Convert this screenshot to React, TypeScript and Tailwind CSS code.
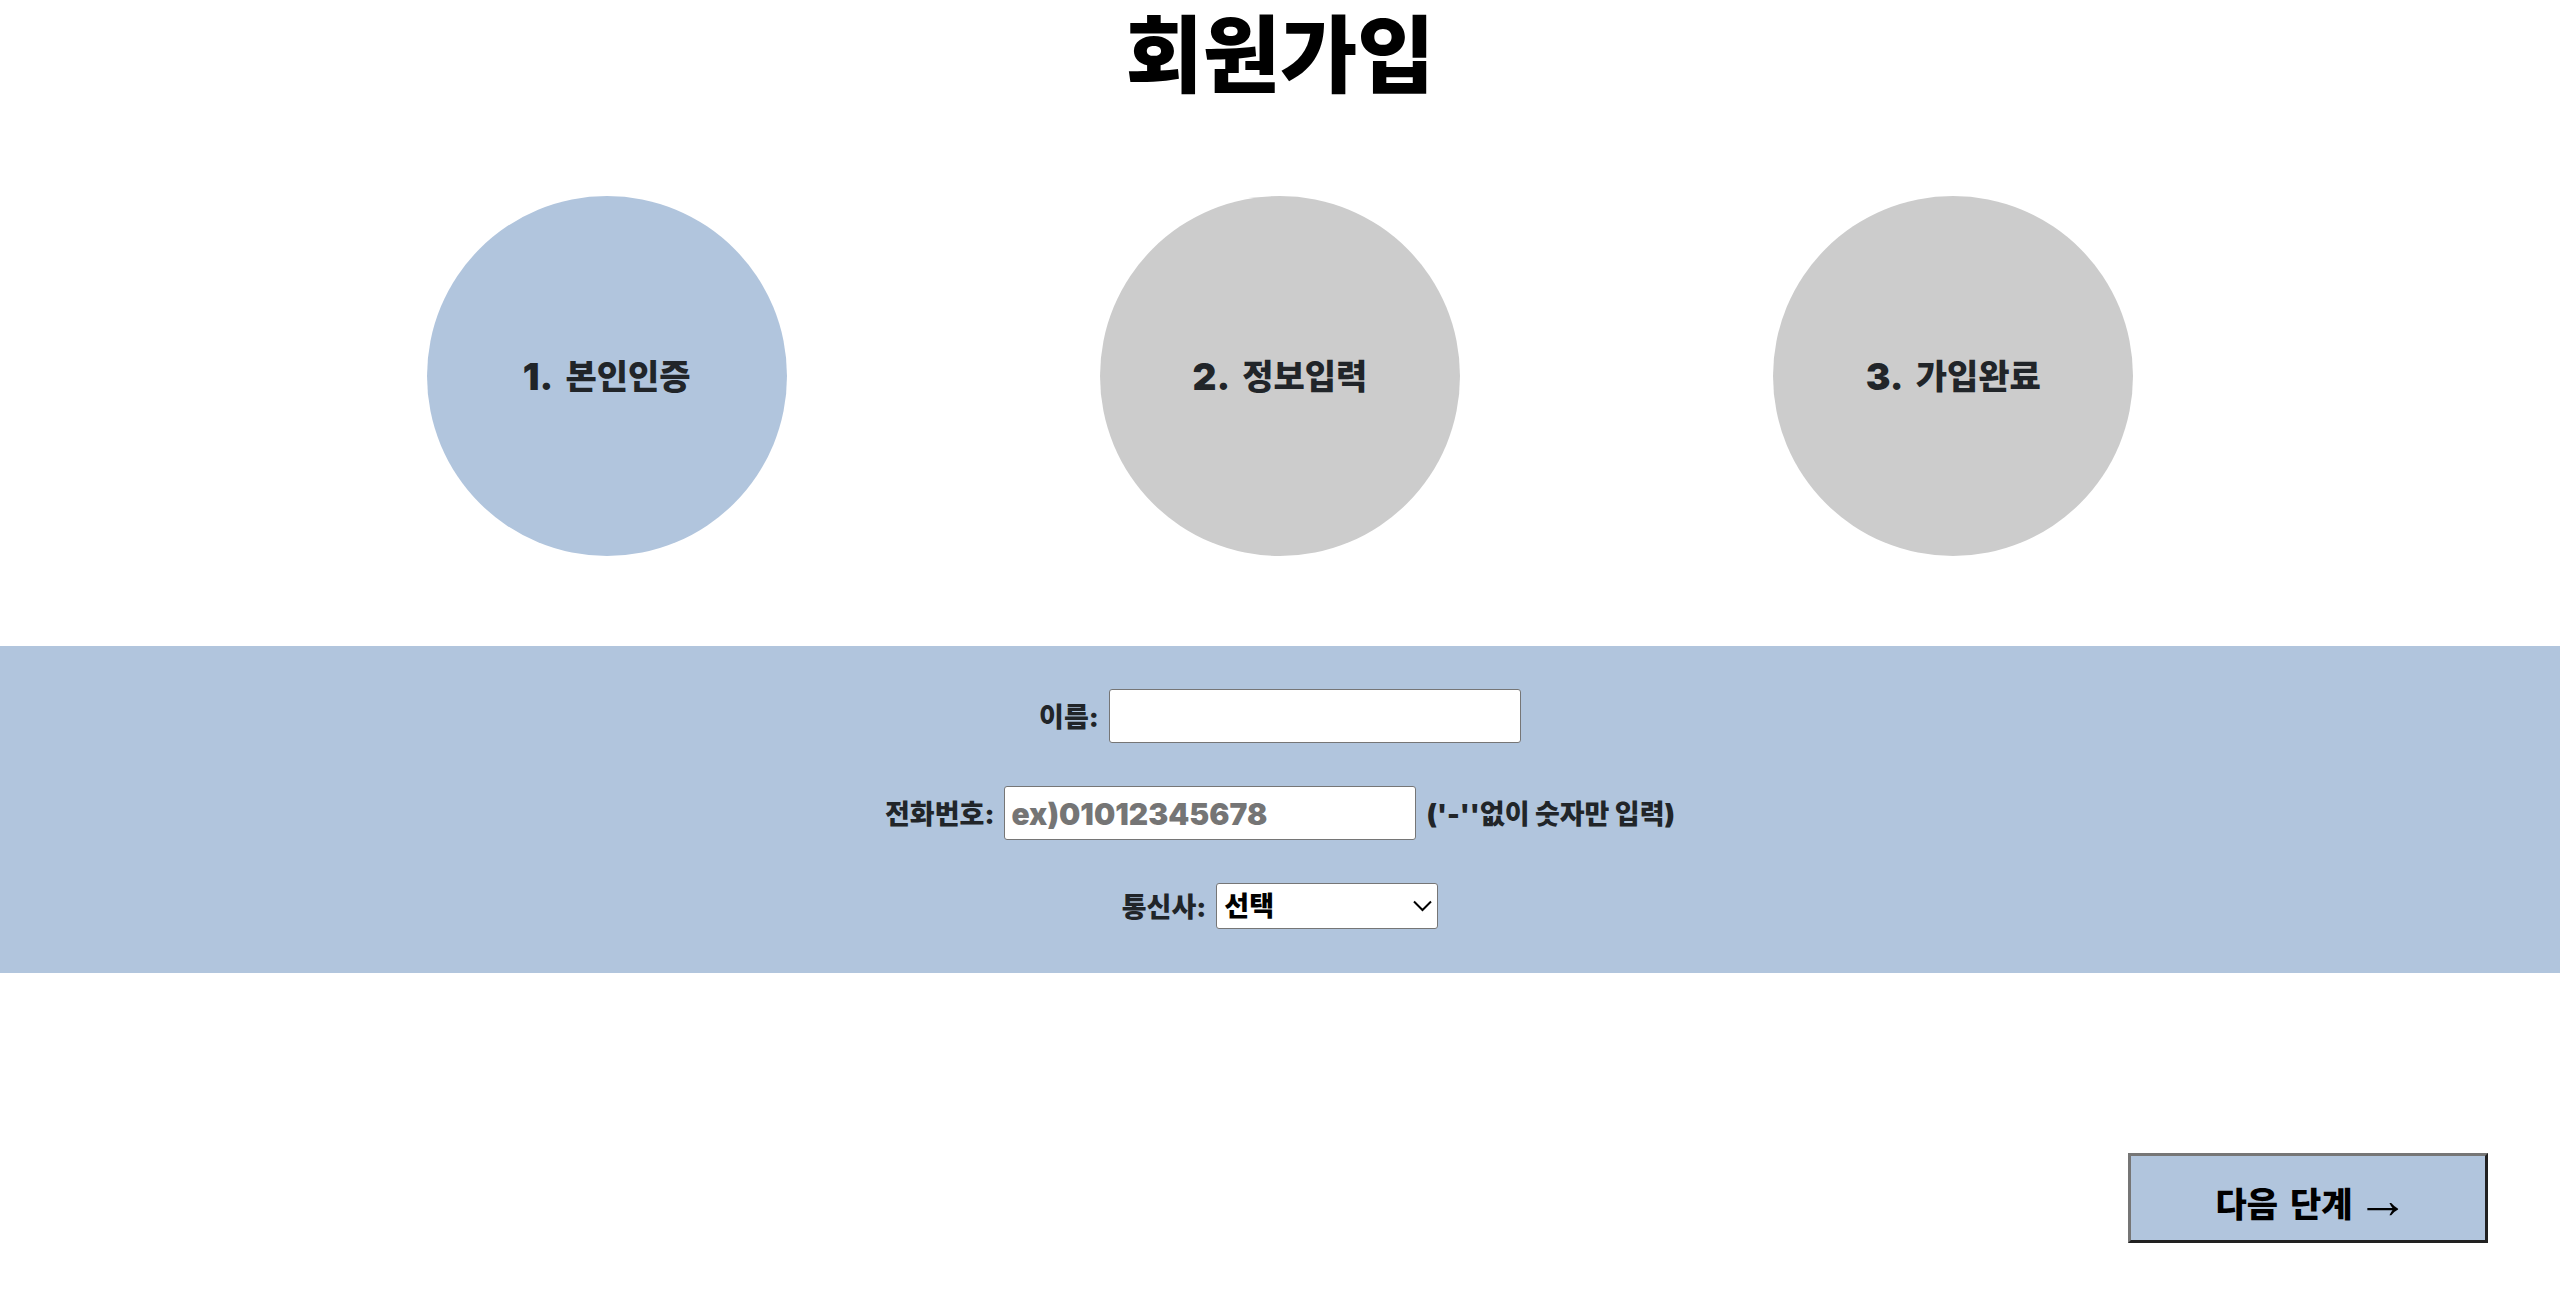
import { ReactNode } from "react";

const steps = [
  { number: "1.", name: "본인인증", active: true },
  { number: "2.", name: "정보입력", active: false },
  { number: "3.", name: "가입완료", active: false },
];

function Step({ number, name, active }: { number: string; name: string; active: boolean }) {
  return (
    <li
      className={`flex size-[360px] items-center justify-center gap-3 rounded-full pt-[2px] leading-[48px] ${
        active ? "bg-[#b1c5dd]" : "bg-[#cccccc]"
      }`}
      aria-current={active ? "step" : undefined}
    >
      <span className="text-[37px]">{number}</span>
      <span className="text-[34px]">{name}</span>
    </li>
  );
}

function Row({ id, label, children }: { id: string; label: string; children: ReactNode }) {
  return (
    <div className="flex items-center justify-center gap-[10px]">
      <label htmlFor={id} className="pt-[3px]">
        {label}
      </label>
      {children}
    </div>
  );
}

const inputClass =
  "h-[54px] w-[412px] rounded-[3px] border border-[#767676] bg-white px-[6px] pt-[2px] text-[30px] font-black placeholder:text-[#757575]";

export default function App() {
  return (
    <main className="min-h-screen bg-white font-['Inter','Noto_Sans_CJK_KR',sans-serif] font-black text-[#212529]">
      <h1 className="text-center text-[84px] leading-[112px] font-black text-black">회원가입</h1>

      <ol className="mx-auto mt-[84px] grid w-[78.9%] grid-cols-3 justify-items-center">
        {steps.map((s) => (
          <Step key={s.number} {...s} />
        ))}
      </ol>

      <form>
        <div className="mt-[90px] flex flex-col gap-[43px] bg-[#b1c5dd] pt-[43px] pb-[44px] text-[27px] leading-[40px]">
          <Row id="name" label="이름:">
            <input id="name" type="text" className={inputClass} />
          </Row>
          <Row id="phone" label="전화번호:">
            <input id="phone" type="tel" placeholder="ex)01012345678" className={inputClass} />
            <span className="pt-[3px]">('-''없이 숫자만 입력)</span>
          </Row>
          <Row id="carrier" label="통신사:">
            <div className="relative">
              <select
                id="carrier"
                className="block h-[46px] w-[222px] appearance-none rounded-[3px] border border-[#767676] bg-white pt-[2px] pl-[7px] leading-[40px] font-black text-black"
              >
                <option>선택</option>
                <option>SKT</option>
                <option>KT</option>
                <option>LG U+</option>
              </select>
              <svg
                className="pointer-events-none absolute top-[17px] right-[6px] h-[12px] w-[19px]"
                viewBox="0 0 19 12"
                fill="none"
                stroke="black"
                strokeWidth="2"
              >
                <path d="M1 1.5 9.5 10 18 1.5" />
              </svg>
            </div>
          </Row>
        </div>

        <div className="mt-[180px] flex justify-end pr-[72px]">
          <button
            type="button"
            className="flex h-[90px] w-[360px] items-center justify-center gap-1 border-[3px] border-t-[#767676] border-r-[#212121] border-b-[#212121] border-l-[#767676] bg-[#b1c5dd] pt-[14px] pl-2 font-['DejaVu_Sans','Noto_Sans_CJK_KR',sans-serif] text-[34px] leading-[48px] font-black text-black"
          >
            <span>다음 단계</span>
            <span className="pb-2 font-['Liberation_Serif'] text-[52px] leading-[48px] font-normal">→</span>
          </button>
        </div>
      </form>
    </main>
  );
}
